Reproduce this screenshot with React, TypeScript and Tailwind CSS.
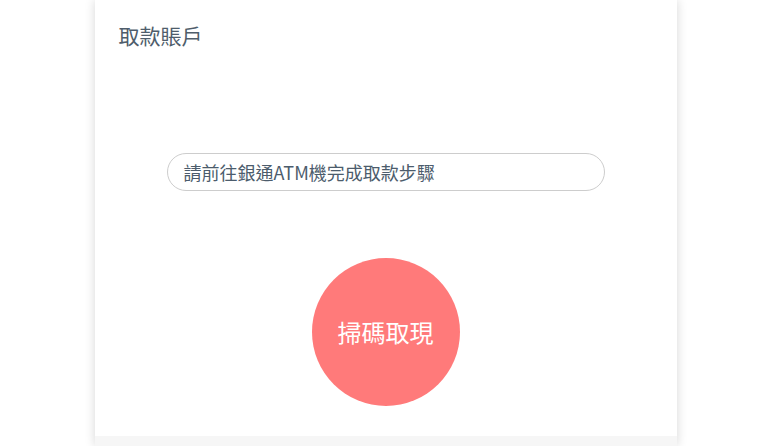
const App = () => {
  return (
    <div className="min-h-screen w-full bg-white flex justify-center overflow-hidden" style={{ fontFamily: '"Noto Sans CJK TC", "Noto Sans", sans-serif' }}>
      <div className="w-[582px] h-[446px] flex flex-col bg-[#f6f6f6] shadow-[0_0_10px_rgba(0,0,0,0.16)]">
        <div className="flex-1 bg-white flex flex-col">
          <h2 className="pl-6 pt-[20px] text-[21px] leading-[30px] text-[#4f5d6b] font-normal">取款賬戶</h2>
          <div className="mt-[103px] px-[72px]">
            <div className="h-[38px] rounded-full border-[1.5px] border-[#cdcdcd] flex items-center pl-[16px] text-[18px] text-[#4c5c6c]">
              請前往銀通ATM機完成取款步驟
            </div>
          </div>
          <div className="mt-[67px] flex justify-center">
            <button className="w-[148px] h-[148px] rounded-full bg-[#ff7a7a] text-white text-[24px] flex items-center justify-center">
              掃碼取現
            </button>
          </div>
        </div>
        <div className="h-[10px]" />
      </div>
    </div>
  );
};

export default App;
